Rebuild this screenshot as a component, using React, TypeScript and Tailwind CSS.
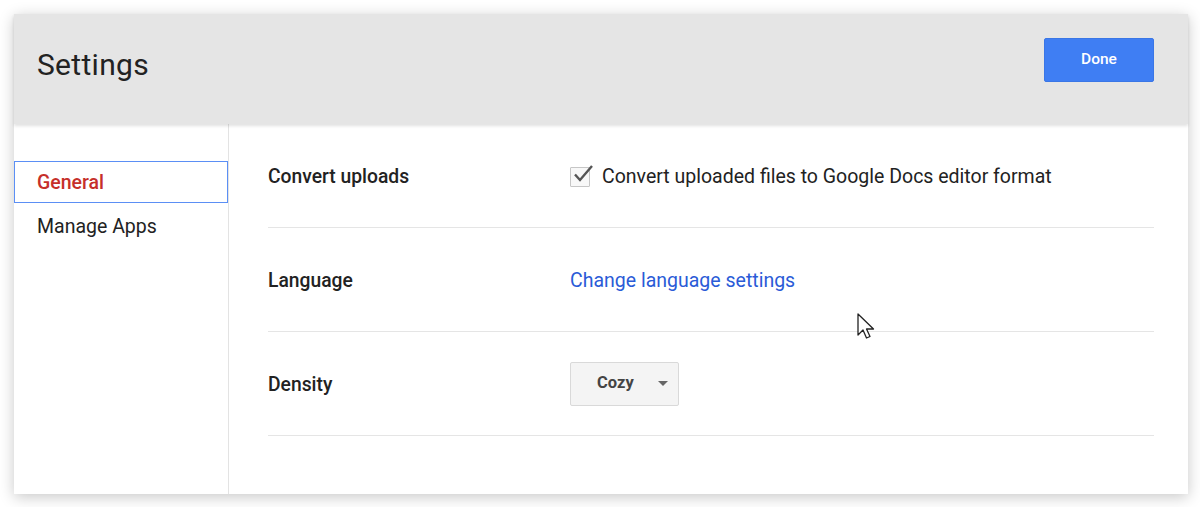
import { useState } from 'react'

const rows = ['Convert uploads', 'Language', 'Density']

export default function App() {
  const [active, setActive] = useState('General')
  const [convert, setConvert] = useState(true)

  return (
    <div className="relative w-[1200px] h-[507px] bg-white p-[14px] pr-[12px]" style={{ fontFamily: 'Roboto, "Liberation Sans", sans-serif' }}>
      <div className="flex flex-col h-[480px] bg-white shadow-[0_3px_14px_rgba(0,0,0,0.22)]">
        {/* Header */}
        <div className="relative z-10 flex items-center justify-between h-[110px] bg-[#e5e5e5] pl-[23px] pr-[34px] shadow-[0_2px_3px_rgba(0,0,0,0.12)]">
          <h1 className="text-[30px] text-[#222] tracking-[0.3px] mt-[-10px]">Settings</h1>
          <button className="w-[110px] h-[44px] mt-[-18px] bg-[#3f7ef3] text-white text-[15.5px] font-medium rounded-[2px] border border-[#3a76e6]">
            Done
          </button>
        </div>

        <div className="flex flex-1">
          {/* Sidebar */}
          <div className="w-[215px] border-r border-[#e3e3e3] pt-[37px]">
            {['General', 'Manage Apps'].map(item => (
              <div
                key={item}
                onClick={() => setActive(item)}
                className={'flex items-center h-[42px] pl-[22px] pt-[2px] text-[19.5px] cursor-pointer border ' + (active === item ? 'border-[#5b8ff5] text-[#c62f2a] font-medium' : 'border-transparent text-[#222] h-[46px]')}
              >
                {item}
              </div>
            ))}
          </div>

          {/* Content */}
          <div className="flex-1 pl-[39px] pr-[34px]">
            {rows.map(label => (
              <div key={label} className="flex items-center h-[104px] pt-[3px] border-b border-[#e5e5e5]">
                <div className="w-[302px] text-[19.3px] font-medium text-[#222]">{label}</div>
                {label === 'Convert uploads' && (
                  <label className="flex items-center gap-[12px] text-[19.5px] text-[#222] cursor-pointer" onClick={() => setConvert(!convert)}>
                    <span className="relative w-[20px] h-[20px] border border-[#c6c6c6] bg-[#f8f8f8] rounded-[1px]">
                      {convert && (
                        <svg className="absolute left-[1px] top-[-4px]" width="22" height="20" viewBox="0 0 22 20">
                          <path d="M3 10.5 L8 16 L20 2" fill="none" stroke="#555" strokeWidth="2.4" />
                        </svg>
                      )}
                    </span>
                    Convert uploaded files to Google Docs editor format
                  </label>
                )}
                {label === 'Language' && (
                  <a href="#" className="text-[19.5px] text-[#2a5bd7]">Change language settings</a>
                )}
                {label === 'Density' && (
                  <div className="flex items-center justify-between w-[109px] h-[44px] mt-[-3px] bg-[#f4f4f4] border border-[#d9d9d9] rounded-[2px] pl-[26px] pr-[10px]">
                    <span className="text-[16.5px] font-bold text-[#444]">Cozy</span>
                    <svg width="10" height="6" viewBox="0 0 10 6"><path d="M0 0 H10 L5 5 Z" fill="#666" /></svg>
                  </div>
                )}
              </div>
            ))}
          </div>
        </div>
      </div>

      {/* mouse cursor */}
      <svg className="absolute left-[857px] top-[313px]" width="20" height="30" viewBox="0 0 20 30">
        <path d="M1 1 L1 22 L6 17 L9.5 25 L13 23.5 L9.5 16 L16.5 16 Z" fill="white" stroke="#222" strokeWidth="1.3" strokeLinejoin="round" />
      </svg>
    </div>
  )
}
